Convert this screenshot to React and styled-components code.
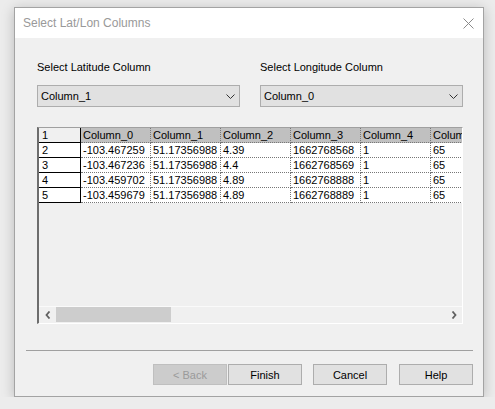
import { Fragment } from 'react';
import styled, { createGlobalStyle } from 'styled-components';

const GlobalStyle = createGlobalStyle`
  html, body {
    margin: 0;
    padding: 0;
    background: #ececec;
    font-family: "Liberation Sans", Arial, sans-serif;
  }
`;

const Window = styled.div`
  box-sizing: border-box;
  width: 470px;
  height: 390px;
  margin: 7px 0 0 14px;
  border: 1px solid #a3a3a3;
  background: #f0f0f0;
  box-shadow: 0 2px 12px rgba(0, 0, 0, 0.22);
  display: flex;
  flex-direction: column;
`;

const TitleBar = styled.div`
  height: 30px;
  background: #fff;
  display: flex;
  align-items: center;
  justify-content: space-between;
  padding: 0 9px 0 8px;
  font-size: 12px;
  color: #999;
`;

const Body = styled.div`
  flex: 1;
  display: flex;
  flex-direction: column;
  padding: 22px 10px 0 22px;
`;

const Fields = styled.div`
  display: flex;
  gap: 20px;
`;

const Field = styled.div`
  width: 203px;
  display: flex;
  flex-direction: column;
  gap: 11px;
`;

const Label = styled.div`
  font-size: 11px;
  line-height: 14px;
  color: #000;
`;

const Combo = styled.div`
  box-sizing: border-box;
  height: 22px;
  background: #e1e1e1;
  border: 1px solid #adadad;
  display: flex;
  align-items: center;
  justify-content: space-between;
  padding: 0 4px 0 3px;
  font-size: 11px;
  color: #000;
`;

const Frame = styled.div`
  box-sizing: border-box;
  width: 426px;
  height: 197px;
  margin-top: 20px;
  border-top: 1px solid #a0a0a0;
  border-left: 2px solid #6d6d6d;
  border-right: 1px solid #fff;
  border-bottom: 1px solid #fff;
  display: flex;
  flex-direction: column;
`;

const Viewport = styled.div`
  flex: 1;
  overflow: hidden;
  background: #f0f0f0;
`;

const Grid = styled.div`
  display: grid;
  grid-template-columns: 42px repeat(6, 70px);
  grid-auto-rows: 15px;
  width: max-content;
  font-size: 11px;
`;

const Cell = styled.div`
  box-sizing: border-box;
  padding-left: ${(p) => (p.$rowHead ? 3 : 2)}px;
  line-height: 14px;
  white-space: nowrap;
  overflow: hidden;
  color: #000;
  background: ${(p) => (p.$corner ? '#f0f0f0' : p.$head ? '#c0c0c0' : '#fff')};
  border-right: 1px ${(p) => (p.$rowHead ? 'solid #000' : 'dotted #777')};
  border-bottom: 1px ${(p) => (p.$rowHead ? 'solid #000' : 'dotted #777')};
`;

const ScrollBar = styled.div`
  height: 17px;
  box-sizing: border-box;
  border-top: 1px solid #fafafa;
  background: #f0f0f0;
  display: flex;
`;

const ArrowButton = styled.div`
  width: 17px;
  display: flex;
  align-items: center;
  justify-content: center;
`;

const Track = styled.div`
  flex: 1;
  display: flex;
`;

const Thumb = styled.div`
  width: 115px;
  background: #cdcdcd;
  margin-bottom: 1px;
`;

const Separator = styled.div`
  height: 1px;
  background: #a0a0a0;
  margin: 26px 0 0 -11px;
`;

const Buttons = styled.div`
  display: flex;
  justify-content: flex-end;
  margin-top: 13px;
`;

const Button = styled.div`
  box-sizing: border-box;
  width: 74px;
  height: 21px;
  margin-left: ${(p) => p.$gap || 0}px;
  display: flex;
  align-items: center;
  justify-content: center;
  font-size: 11px;
  background: ${(p) => (p.$disabled ? '#cccccc' : '#e1e1e1')};
  border: 1px solid ${(p) => (p.$disabled ? '#bfbfbf' : '#adadad')};
  color: ${(p) => (p.$disabled ? '#9a9a9a' : '#000')};
`;

const Chevron = () => (
  <svg width="9" height="5" viewBox="0 0 9 5">
    <polyline points="0.5,0.5 4.5,4.5 8.5,0.5" fill="none" stroke="#333" strokeWidth="1" />
  </svg>
);

const CloseIcon = () => (
  <svg width="11" height="11" viewBox="0 0 11 11">
    <path d="M0.5 0.5 L10.5 10.5 M10.5 0.5 L0.5 10.5" stroke="#8a8a8a" strokeWidth="1" />
  </svg>
);

const ScrollArrow = ({ dir }) => (
  <svg width="6" height="8" viewBox="0 0 6 8">
    <polyline
      points={dir === 'left' ? '4.5,0.5 1.5,4 4.5,7.5' : '1.5,0.5 4.5,4 1.5,7.5'}
      fill="none"
      stroke="#606060"
      strokeWidth="1.8"
    />
  </svg>
);

const headers = ['Column_0', 'Column_1', 'Column_2', 'Column_3', 'Column_4', 'Column_5'];
const rows = [
  ['-103.467259', '51.17356988', '4.39', '1662768568', '1', '65'],
  ['-103.467236', '51.17356988', '4.4', '1662768569', '1', '65'],
  ['-103.459702', '51.17356988', '4.89', '1662768888', '1', '65'],
  ['-103.459679', '51.17356988', '4.89', '1662768889', '1', '65'],
];

export default function App() {
  return (
    <>
      <GlobalStyle />
      <Window>
        <TitleBar>
          <span>Select Lat/Lon Columns</span>
          <CloseIcon />
        </TitleBar>
        <Body>
          <Fields>
            <Field>
              <Label>Select Latitude Column</Label>
              <Combo>
                <span>Column_1</span>
                <Chevron />
              </Combo>
            </Field>
            <Field>
              <Label>Select Longitude Column</Label>
              <Combo>
                <span>Column_0</span>
                <Chevron />
              </Combo>
            </Field>
          </Fields>

          <Frame>
            <Viewport>
              <Grid>
                <Cell $rowHead $corner>1</Cell>
                {headers.map((h) => (
                  <Cell key={h} $head>{h}</Cell>
                ))}
                {rows.map((r, i) => (
                  <Fragment key={i}>
                    <Cell $rowHead>{i + 2}</Cell>
                    {r.map((v, j) => (
                      <Cell key={j}>{v}</Cell>
                    ))}
                  </Fragment>
                ))}
              </Grid>
            </Viewport>
            <ScrollBar>
              <ArrowButton><ScrollArrow dir="left" /></ArrowButton>
              <Track><Thumb /></Track>
              <ArrowButton><ScrollArrow dir="right" /></ArrowButton>
            </ScrollBar>
          </Frame>

          <Separator />
          <Buttons>
            <Button $disabled>&lt; Back</Button>
            <Button $gap={1}>Finish</Button>
            <Button $gap={11}>Cancel</Button>
            <Button $gap={12}>Help</Button>
          </Buttons>
        </Body>
      </Window>
    </>
  );
}
